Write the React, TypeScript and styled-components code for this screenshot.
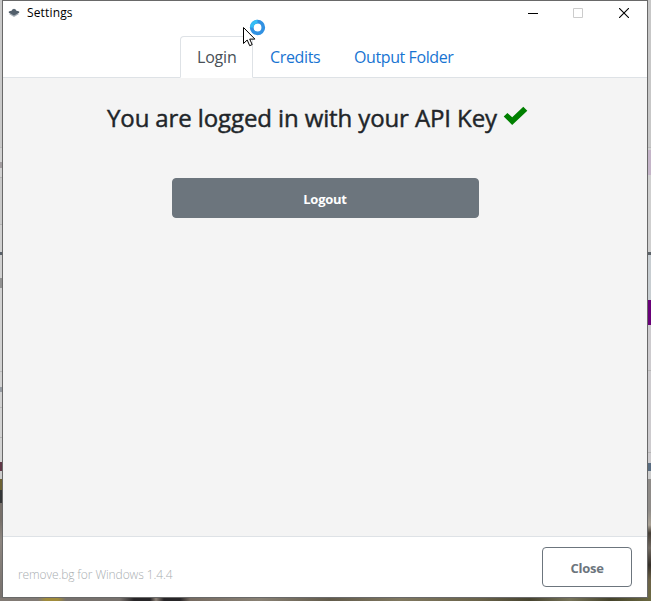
import React from "react";
import styled, { createGlobalStyle } from "styled-components";

const GlobalStyle = createGlobalStyle`
  * { box-sizing: border-box; }
  body { margin: 0; overflow: hidden; font-family: "Open Sans", "Noto Sans", sans-serif; }
  button { font-family: inherit; }
`;

const Desktop = styled.div`
  display: grid;
  grid-template-columns: 2px 646px 3px;
  grid-template-rows: 598px 3px;
  width: 651px;
  height: 601px;
`;

const LeftEdge = styled.div`
  background: linear-gradient(
    #c9c9c9 0 147px, #bbb 147px 148px, #d2d2d2 148px 162px, #a39da0 162px 168px, #d2d2d2 168px 177px,
    #b5b5b5 177px 178px, #c9c9c9 178px 224px, #b5b5b5 224px 225px, #d0d0d0 225px 252px, #59616a 252px 255px,
    #d0d0d0 255px 278px, #929292 278px 288px, #d2d2d2 288px 371px, #b9b9b9 371px 372px, #d2d2d2 372px 387px,
    #969ba2 387px 392px, #d2d2d2 392px 407px, #b9b9b9 407px 408px, #d2d2d2 408px 437px, #b5b5b5 437px 438px,
    #d2d2d2 438px 462px, #603746 462px 471px, #ccc 471px 479px, #6d6234 479px 490px, #343637 490px 503px,
    #77706a 503px 520px, #8d8680 540px, #77716d 598px);
`;

const RightEdge = styled.div`
  background: linear-gradient(
    #c7c7c7 0 147px, #b9b9b9 147px 148px, #cfcfcf 148px 150px, #c4b4c8 150px 175px, #cfcfcf 175px 252px,
    #5b6268 252px 255px, #c7cdd1 255px 300px, #680078 300px 325px, #cdcbce 325px 370px, #b5b5b5 370px 371px,
    #cdcbce 371px 452px, #b5b5b5 452px 453px, #cdcbce 453px 463px, #596c80 463px 471px, #ccc 471px 479px,
    #8e8b88 479px 510px, #aaa295 525px, #443d35 533px, #716a62 548px, #352f29 565px, #6c6248 580px, #6b6942 598px);
`;

const BottomEdge = styled.div`
  grid-column: 1 / -1;
  background: linear-gradient(90deg, #817a74 0 38px, #a18c3c 46px 58px, #77716c 66px 120px, #272527 134px 150px,
    #8c8177 156px, #272527 164px 180px, #766b61 190px, #898174 260px, #625b4b 330px, #807860 400px,
    #696249 480px, #474430 530px, #77745a 570px, #45432b 610px, #6b6942 651px);
`;

const Window = styled.div`
  display: flex;
  flex-direction: column;
  border: 1px solid #696969;
  background: #fff;
`;

const TitleBar = styled.header`
  display: flex;
  align-items: center;
  height: 24px;
  flex: none;
  padding-left: 5px;
`;

const Title = styled.span`
  flex: 1;
  margin-left: 7px;
  font-size: 12px;
  line-height: 24px;
  letter-spacing: 0.15px;
  color: #000;
`;

const WindowControl = styled.span<{ $shift?: number }>`
  display: flex;
  justify-content: center;
  width: 45.5px;
  padding-right: ${(p) => p.$shift ?? 0}px;
`;

const TabBar = styled.nav`
  display: flex;
  align-items: flex-end;
  flex: none;
  height: 53px;
  padding-left: 177px;
  border-bottom: 1px solid #dee2e6;
`;

const Tab = styled.a<{ $active?: boolean; $width: number; $spacing: number }>`
  width: ${(p) => p.$width}px;
  height: 42px;
  margin-bottom: -1px;
  border: 1px solid ${(p) => (p.$active ? "#dee2e6" : "transparent")};
  border-bottom-color: ${(p) => (p.$active ? "#fff" : "transparent")};
  border-radius: 4px 4px 0 0;
  padding-left: 16px;
  font-size: 16px;
  line-height: 41px;
  letter-spacing: ${(p) => p.$spacing}px;
  white-space: nowrap;
  color: ${(p) => (p.$active ? "#495057" : "#1874d2")};
`;

const Content = styled.main`
  flex: 1;
  display: flex;
  flex-direction: column;
  align-items: center;
  background: #f4f4f4;
`;

const Heading = styled.h1`
  display: flex;
  align-items: center;
  align-self: flex-start;
  margin: 22px 0 0 104px;
  height: 34px;
  font-size: 24px;
  font-weight: 500;
  letter-spacing: -0.11px;
  -webkit-text-stroke: 0.45px #212529;
  white-space: nowrap;
  color: #212529;
`;

const CheckIcon = styled.svg`
  margin: -2px 0 0 6px;
`;

const Button = styled.button<{ $outline?: boolean; $width: number }>`
  width: ${(p) => p.$width}px;
  height: 40px;
  padding: 2px 0 0;
  border: 1px solid #6c757d;
  border-radius: 4px;
  background: ${(p) => (p.$outline ? "#fff" : "#6c757d")};
  color: ${(p) => (p.$outline ? "#6c757d" : "#fff")};
  font-size: 13px;
  font-weight: 700;
  letter-spacing: -0.25px;
`;

const LogoutRow = styled.div`
  display: flex;
  margin-top: 44px;
`;

const Footer = styled.footer`
  display: flex;
  justify-content: space-between;
  flex: none;
  height: 61px;
  padding: 10px 15px 0;
  border-top: 1px solid #dee2e6;
`;

const Version = styled.span`
  margin-top: 19px;
  font-size: 12px;
  font-weight: 300;
  line-height: 18px;
  letter-spacing: -0.1px;
  color: #a9aeb1;
`;

const BusyCursor = styled.svg`
  position: absolute;
  left: 242px;
  top: 17px;
`;

export default function App() {
  return (
    <>
      <GlobalStyle />
      <Desktop>
        <LeftEdge />
        <Window>
          <TitleBar>
            <svg width="12" height="10" viewBox="0 0 12 10">
              <path d="M1 6l5 3 5-3-5-2z" fill="#a8b0b8" />
              <path d="M.8 3.500L4 2.500V1.800l2-1 2 1v.7l3.200 1v1.300L6 7.500.8 4.800z" fill="#53606c" />
            </svg>
            <Title>Settings</Title>
            <WindowControl>
              <svg width="10" height="10"><path d="M0 5.500h10" stroke="#000" /></svg>
            </WindowControl>
            <WindowControl $shift={1.5}>
              <svg width="10" height="10"><path d="M.5.5h9v9h-9z" fill="none" stroke="#ccc" /></svg>
            </WindowControl>
            <WindowControl>
              <svg width="10" height="10"><path d="M0 0l10 10M10 0L0 10" stroke="#000" strokeWidth="1.1" /></svg>
            </WindowControl>
          </TitleBar>
          <TabBar>
            <Tab $active $width={73} $spacing={-0.2}>Login</Tab>
            <Tab $width={84} $spacing={-0.35}>Credits</Tab>
            <Tab $width={134} $spacing={-0.4}>Output Folder</Tab>
          </TabBar>
          <Content>
            <Heading>
              <span>You are logged in with your API Key</span>
              <CheckIcon width="25" height="20" viewBox="0 0 25 20">
                <path d="M.7 10.600L4.400 6.900 9.200 11.200 20.300.8 24.300 4.700 9.200 18.900z" fill="#008000" />
              </CheckIcon>
            </Heading>
            <LogoutRow>
              <Button $width={307}>Logout</Button>
            </LogoutRow>
          </Content>
          <Footer>
            <Version>remove.bg for Windows 1.4.4</Version>
            <Button $outline $width={90}>Close</Button>
          </Footer>
        </Window>
        <RightEdge />
        <BottomEdge />
      </Desktop>
      <BusyCursor width="26" height="32" viewBox="0 0 26 32">
        <circle cx="15.500" cy="10.500" r="5.800" fill="#fff" stroke="#3191e2" strokeWidth="3.700" />
        <path d="M9.700 10.500a5.800 5.800 0 0 1 5.800-5.800" fill="none" stroke="#35bdf5" strokeWidth="3.700" />
        <path d="M1.500 10.500v16l3.700-3.500 2.500 5.700 2.500-1.100-2.500-5.500h5.200z" fill="#fff" stroke="#000" />
      </BusyCursor>
    </>
  );
}
